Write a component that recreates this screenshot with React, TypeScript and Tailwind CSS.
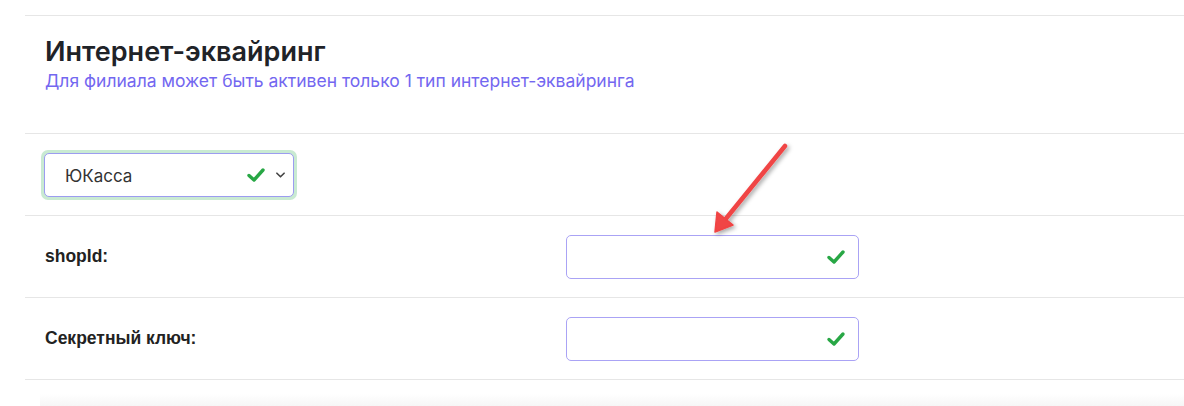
import React from 'react';

function Check({ className = '' }: { className?: string }) {
  return (
    <svg viewBox="0 0 20 16" className={className} fill="none">
      <path d="M3 8.5 L8 13 L17 3" stroke="#28a745" strokeWidth="3.4" strokeLinecap="round" strokeLinejoin="round" />
    </svg>
  );
}

function Field({ label }: { label: string }) {
  return (
    <div className="flex items-center h-[82px] border-b border-[#e6e6e6]">
      <div className="w-[541px] pl-5 text-[17.5px] font-bold text-[#222] font-['Liberation_Sans',Arial,sans-serif]">
        {label}:
      </div>
      <div className="w-[293px] h-[44px] rounded-[5px] border border-[#aaa3f5] flex items-center justify-end pr-3 bg-white">
        <Check className="w-[20px] h-[16px]" />
      </div>
    </div>
  );
}

export default function App() {
  return (
    <div className="relative w-[1184px] h-[406px] bg-white overflow-hidden font-['Inter',sans-serif]">
      <div className="pl-[25px] pt-[15px]">
        <div className="border-t border-[#e6e6e6]">
          {/* Header */}
          <div className="pl-5 pt-[20px] h-[118px] border-b border-[#e6e6e6]">
            <h2 className="text-[27px] leading-[32px] font-semibold text-[#1f2328]">Интернет-эквайринг</h2>
            <p className="mt-[1px] text-[17.5px] leading-[24px] text-[#7367f0]">Для филиала может быть активен только 1 тип интернет-эквайринга</p>
          </div>

          {/* Provider select */}
          <div className="h-[82px] flex items-center pl-4 border-b border-[#e6e6e6]">
            <div className="rounded-[7px] p-[3px] bg-[#c9ead2]">
              <div className="w-[250px] h-[44px] rounded-[5px] border border-[#9c9cf0] bg-white flex items-center pl-5 pr-2">
                <span className="text-[17px] leading-[24px] pt-[3px] text-[#333] flex-1">ЮКасса</span>
                <Check className="w-[20px] h-[16px] mr-[10px]" />
                <svg viewBox="0 0 10 6" className="w-[9px] h-[6px]" fill="none">
                  <path d="M1 1 L5 5 L9 1" stroke="#444" strokeWidth="1.8" strokeLinecap="round" strokeLinejoin="round" />
                </svg>
              </div>
            </div>
          </div>

          <Field label="shopId" />
          <Field label="Секретный ключ" />
        </div>
      </div>

      {/* next card peeking */}
      <div className="absolute left-[40px] right-0 top-[394px] h-[12px] bg-gradient-to-b from-white to-[#f6f6f6]" />

      {/* red annotation arrow */}
      <svg className="absolute left-0 top-0 pointer-events-none" width="1184" height="406">
        <defs>
          <filter id="sh" x="-50%" y="-50%" width="200%" height="200%">
            <feDropShadow dx="2" dy="2" stdDeviation="2" floodColor="#000" floodOpacity="0.35" />
          </filter>
        </defs>
        <g filter="url(#sh)">
          <line x1="785" y1="146" x2="724" y2="221" stroke="#f04444" strokeWidth="4.5" strokeLinecap="round" />
          <path d="M715 232 L717 212 L733 225 Z" fill="#f04444" stroke="#f04444" strokeWidth="1.5" strokeLinejoin="round" />
        </g>
      </svg>
    </div>
  );
}
